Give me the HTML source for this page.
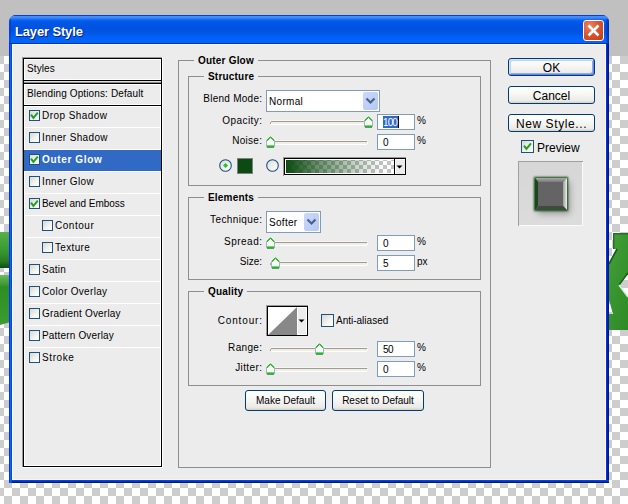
<!DOCTYPE html>
<html><head><meta charset="utf-8"><style>
*{margin:0;padding:0;box-sizing:border-box}
html,body{width:628px;height:504px;overflow:hidden}
body{position:relative;background:#c0c0c0;font-family:"Liberation Sans",sans-serif;}
.a{position:absolute}
.checker{position:absolute;left:0;top:56px;width:628px;height:448px;
 background-color:#cdcdcd;
 background-image:linear-gradient(45deg,#fff 25%,transparent 25%,transparent 75%,#fff 75%),linear-gradient(45deg,#fff 25%,transparent 25%,transparent 75%,#fff 75%);
 background-size:16px 16px;background-position:-4px 0,4px 8px;}
.win{position:absolute;left:9px;top:15px;width:600px;height:468px;border-radius:7px 7px 0 0;overflow:hidden;background:#0a4ee0}
.title{position:absolute;left:0;top:0;width:600px;height:29px;
 background:linear-gradient(#0a3ecf 0px,#0a3ecf 1px,#4a92fb 1px,#3a86f8 3px,#0b63f0 5px,#0058e8 7px,#0052de 13px,#0054e2 17px,#0060f6 22px,#0066fd 26px,#0a62f4 27px,#0a62f4 28px,#0036b4 28px);}
.title .tx{position:absolute;left:6px;top:10px;font:bold 13px/13px "Liberation Sans",sans-serif;letter-spacing:-0.15px;color:#fff;text-shadow:1px 1px 0 #0a1e7a;white-space:nowrap}
.fl{position:absolute;left:0;top:29px;width:3px;height:439px;background:linear-gradient(90deg,#0034e0 0,#0034e0 1px,#1262f2 1px,#1262f2 2px,#004aea 2px)}
.fr{position:absolute;right:0;top:29px;width:3px;height:439px;background:linear-gradient(90deg,#0034e0 0,#0034e0 1px,#0022b4 1px,#0022b4 2px,#001890 2px)}
.fb{position:absolute;left:3px;top:465px;width:597px;height:3px;background:linear-gradient(#0046f0 0,#0046f0 1px,#0030c0 1px,#0030c0 2px,#001888 2px)}
.client{position:absolute;background:#ececec;border:1px solid #fff8e8}
.close{position:absolute;left:574px;top:5px;width:21px;height:21px;border:1px solid #fff;border-radius:3px;
 background:radial-gradient(circle at 30% 25%,#ee8463 0,#dc5430 45%,#c23c14 100%)}
.t{position:absolute;font-size:10px;line-height:10px;white-space:nowrap;color:#000;margin-top:-1px}
.t12{position:absolute;font-size:12px;line-height:12px;white-space:nowrap;color:#000}
.b{font-weight:bold}
.r{position:absolute}
.cb{position:absolute;border:1px solid #1c5180;background:linear-gradient(135deg,#d8d8d2,#f4f4f0 60%,#fff)}
.grp{position:absolute;border:1px solid #8e8e8e}
.gt{position:absolute;background:#ececec;font-weight:bold;font-size:10px;line-height:10px;margin-top:-1px;letter-spacing:0.2px;padding:0 4px;white-space:nowrap}
.sel{position:absolute;border:1px solid #7f9db9;background:#fff}
.inp{position:absolute;width:38px;height:16px;border:1px solid #7f9db9;background:#fff}
.track{position:absolute;height:3px;background:linear-gradient(#9d9c99 0,#9d9c99 1px,#f3f1e6 1px,#f3f1e6 2px,#fff 2px);border-radius:1px 0 0 1px}
.btn{position:absolute;border:1px solid #003c74;border-radius:3px;background:linear-gradient(#fff 0,#fafaf8 30%,#ecebe6 85%,#d6d0c5 100%)}
.ddb{position:absolute;width:15px;height:18px;border-radius:2px;background:linear-gradient(135deg,#cad8fb,#b4c8f6)}
</style></head><body>
<div class="checker"></div>
<svg class="r" style="left:0;top:220px" width="40" height="120"><defs><linearGradient id="gl1" x1="0" y1="0" x2="0" y2="1"><stop offset="0" stop-color="#58b048"/><stop offset="0.5" stop-color="#3a9a2e"/><stop offset="0.8" stop-color="#2a7e22"/><stop offset="1" stop-color="#0e4e0e"/></linearGradient><linearGradient id="gl2" x1="0" y1="0" x2="0" y2="1"><stop offset="0" stop-color="#6cbc5c"/><stop offset="0.25" stop-color="#2e8e22"/><stop offset="1" stop-color="#3c9c30"/></linearGradient></defs><rect x="0" y="12" width="40" height="36" fill="url(#gl1)"/><path d="M0 55 H40 V90 Q20 100 0 105 Z" fill="url(#gl2)"/></svg>
<svg class="r" style="left:600px;top:220px" width="28" height="120"><defs><linearGradient id="gx" x1="0" y1="0" x2="1" y2="1"><stop offset="0" stop-color="#4aa63c"/><stop offset="0.5" stop-color="#3a9630"/><stop offset="1" stop-color="#2e8a26"/></linearGradient></defs><path d="M13 13 H28 V53 L19 65 L28 77 V110 H0 V94 H13 L9 80 V44 L17 29 H13 Z" fill="url(#gx)"/><path d="M13.7 29 V13.7 H28" stroke="#256e25" stroke-width="1.4" fill="none"/><path d="M17 29 L9 44" stroke="#1a561a" stroke-width="1.6"/><path d="M19 65 L28 53" stroke="#1d5e1d" stroke-width="1.5"/><path d="M19 65 L28 77" stroke="#d8f0d8" stroke-width="1.5"/></svg>
<div class="win"><div class="title"><div class="tx">Layer Style</div><div class="close"><svg width="21" height="21" style="position:absolute;left:-1px;top:-1px" viewBox="0 0 21 21"><path d="M5.5 5.5 L15.5 15.5 M15.5 5.5 L5.5 15.5" stroke="#fff" stroke-width="2.6"/></svg></div><div class="r" style="left:597px;top:4px;width:3px;height:25px;background:linear-gradient(90deg,rgba(0,40,200,0.25),rgba(0,24,150,0.7))"></div><div class="r" style="left:0;top:4px;width:2px;height:25px;background:rgba(0,40,200,0.35)"></div></div><div class="fl"></div><div class="fr"></div><div class="fb"></div></div>
<div class="client" style="left:12px;top:44px;width:594px;height:436px"></div>
<div class="r" style="left:22px;top:57px;width:140px;height:1px;background:#9a9a9a;"></div>
<div class="r" style="left:22px;top:57px;width:1px;height:410px;background:#9a9a9a;"></div>
<div class="r" style="left:162px;top:57px;width:1px;height:411px;background:#fff;"></div>
<div class="r" style="left:22px;top:467px;width:141px;height:1px;background:#fff;"></div>
<div class="r" style="left:23px;top:58px;width:139px;height:409px;background:#000;"></div>
<div class="r" style="left:24px;top:59px;width:137px;height:407px;background:#ececec;"></div>
<div class="r" style="left:24px;top:59px;width:137px;height:1px;background:#fff;"></div>
<div class="r" style="left:24px;top:59px;width:1px;height:407px;background:#fff;"></div>
<div class="r" style="left:160px;top:59px;width:1px;height:407px;background:#fff;"></div>
<div class="r" style="left:24px;top:465px;width:137px;height:1px;background:#fff;"></div>
<div class="r" style="left:24px;top:79px;width:137px;height:1px;background:#fff;"></div>
<div class="r" style="left:24px;top:80px;width:137px;height:1px;background:#000;"></div>
<div class="r" style="left:24px;top:81px;width:137px;height:1px;background:#dcdcdc;"></div>
<div class="r" style="left:24px;top:82px;width:137px;height:1px;background:#8a8a8a;"></div>
<div class="r" style="left:24px;top:83px;width:137px;height:1px;background:#000;"></div>
<div class="r" style="left:24px;top:84px;width:137px;height:1px;background:#fff;"></div>
<div class="r" style="left:24px;top:104px;width:137px;height:1px;background:#fff;"></div>
<div class="r" style="left:24px;top:105px;width:137px;height:1px;background:#000;"></div>
<div class="r" style="left:24px;top:106px;width:137px;height:1px;background:#fff;"></div>
<div class="r" style="left:24px;top:127px;width:137px;height:1px;background:#fff;"></div>
<div class="r" style="left:24px;top:149px;width:137px;height:1px;background:#fff;"></div>
<div class="r" style="left:24px;top:171px;width:137px;height:1px;background:#fff;"></div>
<div class="r" style="left:24px;top:193px;width:137px;height:1px;background:#fff;"></div>
<div class="r" style="left:24px;top:215px;width:137px;height:1px;background:#fff;"></div>
<div class="r" style="left:24px;top:237px;width:137px;height:1px;background:#fff;"></div>
<div class="r" style="left:24px;top:259px;width:137px;height:1px;background:#fff;"></div>
<div class="r" style="left:24px;top:281px;width:137px;height:1px;background:#fff;"></div>
<div class="r" style="left:24px;top:303px;width:137px;height:1px;background:#fff;"></div>
<div class="r" style="left:24px;top:325px;width:137px;height:1px;background:#fff;"></div>
<div class="r" style="left:24px;top:347px;width:137px;height:1px;background:#fff;"></div>
<div class="r" style="left:24px;top:150px;width:137px;height:21px;background:#316ac5;"></div>
<div class="t" style="left:27px;top:65px;letter-spacing:0.1px">Styles</div>
<div class="t" style="left:27px;top:90px;letter-spacing:0.12px">Blending Options: Default</div>
<div class="cb" style="left:29px;top:110px;width:11px;height:11px"><svg width="11" height="11" style="position:absolute;left:-1px;top:-1px" viewBox="0 0 11 11"><path d="M2 4.6 L4.4 7.8 L8.8 2.6" stroke="#21a121" stroke-width="2" fill="none"/></svg></div>
<div class="t" style="left:42px;top:112px;letter-spacing:0.45px">Drop Shadow</div>
<div class="cb" style="left:29px;top:132px;width:11px;height:11px"></div>
<div class="t" style="left:42px;top:134px;letter-spacing:0.35px">Inner Shadow</div>
<div class="cb" style="left:29px;top:154px;width:11px;height:11px"><svg width="11" height="11" style="position:absolute;left:-1px;top:-1px" viewBox="0 0 11 11"><path d="M2 4.6 L4.4 7.8 L8.8 2.6" stroke="#21a121" stroke-width="2" fill="none"/></svg></div>
<div class="t b" style="left:42px;top:156px;color:#fff;letter-spacing:0.65px">Outer Glow</div>
<div class="cb" style="left:29px;top:176px;width:11px;height:11px"></div>
<div class="t" style="left:42px;top:178px;letter-spacing:0.38px">Inner Glow</div>
<div class="cb" style="left:29px;top:198px;width:11px;height:11px"><svg width="11" height="11" style="position:absolute;left:-1px;top:-1px" viewBox="0 0 11 11"><path d="M2 4.6 L4.4 7.8 L8.8 2.6" stroke="#21a121" stroke-width="2" fill="none"/></svg></div>
<div class="t" style="left:42px;top:200px;letter-spacing:-0.05px">Bevel and Emboss</div>
<div class="cb" style="left:42px;top:220px;width:11px;height:11px"></div>
<div class="t" style="left:55px;top:222px;letter-spacing:0.53px">Contour</div>
<div class="cb" style="left:42px;top:242px;width:11px;height:11px"></div>
<div class="t" style="left:55px;top:244px;letter-spacing:0.33px">Texture</div>
<div class="cb" style="left:29px;top:264px;width:11px;height:11px"></div>
<div class="t" style="left:42px;top:266px;letter-spacing:0.25px">Satin</div>
<div class="cb" style="left:29px;top:286px;width:11px;height:11px"></div>
<div class="t" style="left:42px;top:288px;letter-spacing:0.33px">Color Overlay</div>
<div class="cb" style="left:29px;top:308px;width:11px;height:11px"></div>
<div class="t" style="left:42px;top:310px;letter-spacing:0.2px">Gradient Overlay</div>
<div class="cb" style="left:29px;top:330px;width:11px;height:11px"></div>
<div class="t" style="left:42px;top:332px;letter-spacing:0.17px">Pattern Overlay</div>
<div class="cb" style="left:29px;top:352px;width:11px;height:11px"></div>
<div class="t" style="left:42px;top:354px;letter-spacing:0.6px">Stroke</div>
<div class="r" style="left:178px;top:60px;width:313px;height:1px;background:#8e8e8e;"></div>
<div class="r" style="left:178px;top:467px;width:313px;height:1px;background:#8e8e8e;"></div>
<div class="r" style="left:178px;top:60px;width:1px;height:408px;background:#8e8e8e;"></div>
<div class="r" style="left:490px;top:60px;width:1px;height:408px;background:#8e8e8e;"></div>
<div class="gt" style="left:194px;top:57px">Outer Glow</div>
<div class="r" style="left:188px;top:76px;width:293px;height:1px;background:#8e8e8e;"></div>
<div class="r" style="left:188px;top:185px;width:293px;height:1px;background:#8e8e8e;"></div>
<div class="r" style="left:188px;top:76px;width:1px;height:110px;background:#8e8e8e;"></div>
<div class="r" style="left:480px;top:76px;width:1px;height:110px;background:#8e8e8e;"></div>
<div class="gt" style="left:204px;top:73px">Structure</div>
<div class="r" style="left:188px;top:197px;width:293px;height:1px;background:#8e8e8e;"></div>
<div class="r" style="left:188px;top:279px;width:293px;height:1px;background:#8e8e8e;"></div>
<div class="r" style="left:188px;top:197px;width:1px;height:83px;background:#8e8e8e;"></div>
<div class="r" style="left:480px;top:197px;width:1px;height:83px;background:#8e8e8e;"></div>
<div class="gt" style="left:204px;top:194px">Elements</div>
<div class="r" style="left:188px;top:291px;width:293px;height:1px;background:#8e8e8e;"></div>
<div class="r" style="left:188px;top:385px;width:293px;height:1px;background:#8e8e8e;"></div>
<div class="r" style="left:188px;top:291px;width:1px;height:95px;background:#8e8e8e;"></div>
<div class="r" style="left:480px;top:291px;width:1px;height:95px;background:#8e8e8e;"></div>
<div class="gt" style="left:204px;top:288px">Quality</div>
<div class="t" style="right:365.74px;top:95px;letter-spacing:0.26px">Blend Mode:</div>
<div class="sel" style="left:266px;top:90px;width:114px;height:22px"></div>
<div class="ddb" style="left:363px;top:92px"></div>
<svg class="r" style="left:363px;top:92px" width="15" height="18"><path d="M3.5 6.5 L7.5 10.5 L11.5 6.5" stroke="#4d6185" stroke-width="2.2" fill="none"/></svg>
<div class="t" style="left:269px;top:98px;letter-spacing:0.3px">Normal</div>
<div class="t" style="right:365.57px;top:117px;letter-spacing:0.43px">Opacity:</div>
<div class="r" style="left:271px;top:120px;width:97px;height:1px;background:#f6f6f4;"></div>
<div class="r" style="left:271px;top:121px;width:96px;height:1px;background:#9d9c99;"></div>
<div class="r" style="left:271px;top:122px;width:96px;height:2px;background:#f1efe4;"></div>
<div class="r" style="left:271px;top:124px;width:96px;height:1px;background:#ffffff;"></div>
<div class="r" style="left:270px;top:122px;width:1px;height:2px;background:#a8a7a4;"></div>
<div class="r" style="left:367px;top:122px;width:1px;height:2px;background:#ffffff;"></div>
<svg class="r" style="left:364px;top:116px" width="9" height="12" shape-rendering="crispEdges"><rect x="4" y="0" width="1" height="1" fill="#a8bcc4"/><rect x="3" y="1" width="3" height="1" fill="#32c032"/><rect x="2" y="2" width="2" height="1" fill="#32c032"/><rect x="4" y="2" width="1" height="1" fill="#fbfbf9"/><rect x="5" y="2" width="2" height="1" fill="#32c032"/><rect x="1" y="3" width="2" height="1" fill="#32c032"/><rect x="3" y="3" width="3" height="1" fill="#fbfbf9"/><rect x="6" y="3" width="2" height="1" fill="#32c032"/><rect x="0" y="4" width="1" height="1" fill="#a3b3c0"/><rect x="1" y="4" width="1" height="1" fill="#32c032"/><rect x="2" y="4" width="5" height="1" fill="#fbfbf9"/><rect x="7" y="4" width="1" height="1" fill="#32c032"/><rect x="8" y="4" width="1" height="1" fill="#a3b3c0"/><rect x="0" y="5" width="1" height="6" fill="#a3b3c0"/><rect x="8" y="5" width="1" height="6" fill="#a3b3c0"/><rect x="1" y="5" width="7" height="4" fill="#fbfbf9"/><rect x="1" y="9" width="7" height="1" fill="#6ad86a"/><rect x="1" y="10" width="7" height="1" fill="#1ec01e"/><rect x="1" y="11" width="7" height="1" fill="#6a9078"/></svg>
<div class="inp" style="left:377px;top:114px"></div>
<div class="r" style="left:383px;top:116px;width:15px;height:12px;background:#316ac5;"></div>
<div class="r" style="left:398px;top:116px;width:1px;height:12px;background:#000;"></div>
<div class="t" style="left:383px;top:119px;color:#fff;letter-spacing:-0.9px">100</div>
<div class="t" style="left:417px;top:117px;">%</div>
<div class="t" style="right:365.7px;top:137px;letter-spacing:0.3px">Noise:</div>
<div class="r" style="left:271px;top:140px;width:97px;height:1px;background:#f6f6f4;"></div>
<div class="r" style="left:271px;top:141px;width:96px;height:1px;background:#9d9c99;"></div>
<div class="r" style="left:271px;top:142px;width:96px;height:2px;background:#f1efe4;"></div>
<div class="r" style="left:271px;top:144px;width:96px;height:1px;background:#ffffff;"></div>
<div class="r" style="left:270px;top:142px;width:1px;height:2px;background:#a8a7a4;"></div>
<div class="r" style="left:367px;top:142px;width:1px;height:2px;background:#ffffff;"></div>
<svg class="r" style="left:266px;top:136px" width="9" height="12" shape-rendering="crispEdges"><rect x="4" y="0" width="1" height="1" fill="#a8bcc4"/><rect x="3" y="1" width="3" height="1" fill="#32c032"/><rect x="2" y="2" width="2" height="1" fill="#32c032"/><rect x="4" y="2" width="1" height="1" fill="#fbfbf9"/><rect x="5" y="2" width="2" height="1" fill="#32c032"/><rect x="1" y="3" width="2" height="1" fill="#32c032"/><rect x="3" y="3" width="3" height="1" fill="#fbfbf9"/><rect x="6" y="3" width="2" height="1" fill="#32c032"/><rect x="0" y="4" width="1" height="1" fill="#a3b3c0"/><rect x="1" y="4" width="1" height="1" fill="#32c032"/><rect x="2" y="4" width="5" height="1" fill="#fbfbf9"/><rect x="7" y="4" width="1" height="1" fill="#32c032"/><rect x="8" y="4" width="1" height="1" fill="#a3b3c0"/><rect x="0" y="5" width="1" height="6" fill="#a3b3c0"/><rect x="8" y="5" width="1" height="6" fill="#a3b3c0"/><rect x="1" y="5" width="7" height="4" fill="#fbfbf9"/><rect x="1" y="9" width="7" height="1" fill="#6ad86a"/><rect x="1" y="10" width="7" height="1" fill="#1ec01e"/><rect x="1" y="11" width="7" height="1" fill="#6a9078"/></svg>
<div class="inp" style="left:377px;top:134px"></div>
<div class="t" style="left:383px;top:139px;letter-spacing:-0.6px">0</div>
<div class="t" style="left:417px;top:137px;">%</div>
<svg class="r" style="left:219px;top:159px" width="13" height="13"><defs><linearGradient id="rg219" x1="0" y1="0" x2="1" y2="1"><stop offset="0" stop-color="#dcdcd6"/><stop offset="1" stop-color="#fff"/></linearGradient></defs><circle cx="6.5" cy="6.5" r="5.8" fill="url(#rg219)" stroke="#1c5180" stroke-width="1.1"/><path d="M6.5 4 L9 6.5 L6.5 9 L4 6.5 Z" fill="#2ac12a"/></svg>
<div class="r" style="left:237px;top:158px;width:16px;height:16px;background:#808080;"></div>
<div class="r" style="left:238px;top:159px;width:14px;height:14px;background:#0b4a10;"></div>
<svg class="r" style="left:266px;top:159px" width="13" height="13"><defs><linearGradient id="rg266" x1="0" y1="0" x2="1" y2="1"><stop offset="0" stop-color="#dcdcd6"/><stop offset="1" stop-color="#fff"/></linearGradient></defs><circle cx="6.5" cy="6.5" r="5.8" fill="url(#rg266)" stroke="#1c5180" stroke-width="1.1"/></svg>
<div class="r" style="left:283px;top:157px;width:123px;height:1px;background:#9a9a9a;"></div>
<div class="r" style="left:283px;top:157px;width:1px;height:19px;background:#9a9a9a;"></div>
<div class="r" style="left:284px;top:158px;width:122px;height:17px;background:#000;"></div>
<div class="r" style="left:285px;top:159px;width:120px;height:15px;background:#fff;"></div>
<div class="r" style="left:286px;top:160px;width:108px;height:13px;background-color:#fff;background-image:linear-gradient(45deg,#c2c2c2 25%,transparent 25%,transparent 75%,#c2c2c2 75%),linear-gradient(45deg,#c2c2c2 25%,transparent 25%,transparent 75%,#c2c2c2 75%);background-size:8px 8px;background-position:1px 1px,5px 5px"></div>
<div class="r" style="left:286px;top:160px;width:108px;height:13px;background:linear-gradient(90deg,#0b4a10 0%,rgba(11,74,16,0.6) 30%,rgba(11,74,16,0.12) 75%,rgba(11,74,16,0) 92%)"></div>
<div class="r" style="left:394px;top:158px;width:1px;height:17px;background:#000;"></div>
<div class="r" style="left:395px;top:159px;width:10px;height:15px;background:#fff;"></div>
<div class="r" style="left:396px;top:160px;width:9px;height:14px;background:#ececec;"></div>
<svg class="r" style="left:396px;top:165px" width="8" height="5"><path d="M0.5 0.5 H6.5 L3.5 3.5 Z" fill="#000"/></svg>
<div class="t" style="right:365.6px;top:216px;letter-spacing:0.4px">Technique:</div>
<div class="sel" style="left:266px;top:211px;width:55px;height:22px"></div>
<div class="ddb" style="left:304px;top:213px"></div>
<svg class="r" style="left:304px;top:213px" width="15" height="18"><path d="M3.5 6.5 L7.5 10.5 L11.5 6.5" stroke="#4d6185" stroke-width="2.2" fill="none"/></svg>
<div class="t" style="left:269px;top:219px;letter-spacing:0.3px">Softer</div>
<div class="t" style="right:365.5px;top:238px;letter-spacing:0.5px">Spread:</div>
<div class="r" style="left:271px;top:241px;width:97px;height:1px;background:#f6f6f4;"></div>
<div class="r" style="left:271px;top:242px;width:96px;height:1px;background:#9d9c99;"></div>
<div class="r" style="left:271px;top:243px;width:96px;height:2px;background:#f1efe4;"></div>
<div class="r" style="left:271px;top:245px;width:96px;height:1px;background:#ffffff;"></div>
<div class="r" style="left:270px;top:243px;width:1px;height:2px;background:#a8a7a4;"></div>
<div class="r" style="left:367px;top:243px;width:1px;height:2px;background:#ffffff;"></div>
<svg class="r" style="left:266px;top:237px" width="9" height="12" shape-rendering="crispEdges"><rect x="4" y="0" width="1" height="1" fill="#a8bcc4"/><rect x="3" y="1" width="3" height="1" fill="#32c032"/><rect x="2" y="2" width="2" height="1" fill="#32c032"/><rect x="4" y="2" width="1" height="1" fill="#fbfbf9"/><rect x="5" y="2" width="2" height="1" fill="#32c032"/><rect x="1" y="3" width="2" height="1" fill="#32c032"/><rect x="3" y="3" width="3" height="1" fill="#fbfbf9"/><rect x="6" y="3" width="2" height="1" fill="#32c032"/><rect x="0" y="4" width="1" height="1" fill="#a3b3c0"/><rect x="1" y="4" width="1" height="1" fill="#32c032"/><rect x="2" y="4" width="5" height="1" fill="#fbfbf9"/><rect x="7" y="4" width="1" height="1" fill="#32c032"/><rect x="8" y="4" width="1" height="1" fill="#a3b3c0"/><rect x="0" y="5" width="1" height="6" fill="#a3b3c0"/><rect x="8" y="5" width="1" height="6" fill="#a3b3c0"/><rect x="1" y="5" width="7" height="4" fill="#fbfbf9"/><rect x="1" y="9" width="7" height="1" fill="#6ad86a"/><rect x="1" y="10" width="7" height="1" fill="#1ec01e"/><rect x="1" y="11" width="7" height="1" fill="#6a9078"/></svg>
<div class="inp" style="left:377px;top:235px"></div>
<div class="t" style="left:383px;top:240px;letter-spacing:-0.6px">0</div>
<div class="t" style="left:417px;top:238px;">%</div>
<div class="t" style="right:366px;top:258px;letter-spacing:0px">Size:</div>
<div class="r" style="left:271px;top:261px;width:97px;height:1px;background:#f6f6f4;"></div>
<div class="r" style="left:271px;top:262px;width:96px;height:1px;background:#9d9c99;"></div>
<div class="r" style="left:271px;top:263px;width:96px;height:2px;background:#f1efe4;"></div>
<div class="r" style="left:271px;top:265px;width:96px;height:1px;background:#ffffff;"></div>
<div class="r" style="left:270px;top:263px;width:1px;height:2px;background:#a8a7a4;"></div>
<div class="r" style="left:367px;top:263px;width:1px;height:2px;background:#ffffff;"></div>
<svg class="r" style="left:271px;top:257px" width="9" height="12" shape-rendering="crispEdges"><rect x="4" y="0" width="1" height="1" fill="#a8bcc4"/><rect x="3" y="1" width="3" height="1" fill="#32c032"/><rect x="2" y="2" width="2" height="1" fill="#32c032"/><rect x="4" y="2" width="1" height="1" fill="#fbfbf9"/><rect x="5" y="2" width="2" height="1" fill="#32c032"/><rect x="1" y="3" width="2" height="1" fill="#32c032"/><rect x="3" y="3" width="3" height="1" fill="#fbfbf9"/><rect x="6" y="3" width="2" height="1" fill="#32c032"/><rect x="0" y="4" width="1" height="1" fill="#a3b3c0"/><rect x="1" y="4" width="1" height="1" fill="#32c032"/><rect x="2" y="4" width="5" height="1" fill="#fbfbf9"/><rect x="7" y="4" width="1" height="1" fill="#32c032"/><rect x="8" y="4" width="1" height="1" fill="#a3b3c0"/><rect x="0" y="5" width="1" height="6" fill="#a3b3c0"/><rect x="8" y="5" width="1" height="6" fill="#a3b3c0"/><rect x="1" y="5" width="7" height="4" fill="#fbfbf9"/><rect x="1" y="9" width="7" height="1" fill="#6ad86a"/><rect x="1" y="10" width="7" height="1" fill="#1ec01e"/><rect x="1" y="11" width="7" height="1" fill="#6a9078"/></svg>
<div class="inp" style="left:377px;top:255px"></div>
<div class="t" style="left:383px;top:260px;letter-spacing:-0.6px">5</div>
<div class="t" style="left:417px;top:258px;">px</div>
<div class="t" style="right:365.15px;top:317px;letter-spacing:0.85px">Contour:</div>
<div class="r" style="left:266px;top:305px;width:42px;height:1px;background:#9a9a9a;"></div>
<div class="r" style="left:266px;top:305px;width:1px;height:31px;background:#9a9a9a;"></div>
<div class="r" style="left:267px;top:306px;width:41px;height:30px;background:#000;"></div>
<div class="r" style="left:268px;top:307px;width:29px;height:28px;background:#fff;"></div>
<svg class="r" style="left:268px;top:307px" width="29" height="28"><path d="M0 28 L29 0 L29 28 Z" fill="#888"/></svg>
<div class="r" style="left:297px;top:307px;width:10px;height:28px;background:#fff;"></div>
<div class="r" style="left:298px;top:308px;width:8px;height:26px;background:#ececec;"></div>
<svg class="r" style="left:298px;top:319px" width="8" height="5"><path d="M0.5 0.5 H6.5 L3.5 3.5 Z" fill="#000"/></svg>
<div class="cb" style="left:321px;top:314px;width:13px;height:13px"></div>
<div class="t" style="left:336px;top:317px;">Anti-aliased</div>
<div class="t" style="right:365.67px;top:344px;letter-spacing:0.33px">Range:</div>
<div class="r" style="left:271px;top:347px;width:97px;height:1px;background:#f6f6f4;"></div>
<div class="r" style="left:271px;top:348px;width:96px;height:1px;background:#9d9c99;"></div>
<div class="r" style="left:271px;top:349px;width:96px;height:2px;background:#f1efe4;"></div>
<div class="r" style="left:271px;top:351px;width:96px;height:1px;background:#ffffff;"></div>
<div class="r" style="left:270px;top:349px;width:1px;height:2px;background:#a8a7a4;"></div>
<div class="r" style="left:367px;top:349px;width:1px;height:2px;background:#ffffff;"></div>
<svg class="r" style="left:315px;top:343px" width="9" height="12" shape-rendering="crispEdges"><rect x="4" y="0" width="1" height="1" fill="#a8bcc4"/><rect x="3" y="1" width="3" height="1" fill="#32c032"/><rect x="2" y="2" width="2" height="1" fill="#32c032"/><rect x="4" y="2" width="1" height="1" fill="#fbfbf9"/><rect x="5" y="2" width="2" height="1" fill="#32c032"/><rect x="1" y="3" width="2" height="1" fill="#32c032"/><rect x="3" y="3" width="3" height="1" fill="#fbfbf9"/><rect x="6" y="3" width="2" height="1" fill="#32c032"/><rect x="0" y="4" width="1" height="1" fill="#a3b3c0"/><rect x="1" y="4" width="1" height="1" fill="#32c032"/><rect x="2" y="4" width="5" height="1" fill="#fbfbf9"/><rect x="7" y="4" width="1" height="1" fill="#32c032"/><rect x="8" y="4" width="1" height="1" fill="#a3b3c0"/><rect x="0" y="5" width="1" height="6" fill="#a3b3c0"/><rect x="8" y="5" width="1" height="6" fill="#a3b3c0"/><rect x="1" y="5" width="7" height="4" fill="#fbfbf9"/><rect x="1" y="9" width="7" height="1" fill="#6ad86a"/><rect x="1" y="10" width="7" height="1" fill="#1ec01e"/><rect x="1" y="11" width="7" height="1" fill="#6a9078"/></svg>
<div class="inp" style="left:377px;top:341px"></div>
<div class="t" style="left:383px;top:346px;letter-spacing:-0.6px">50</div>
<div class="t" style="left:417px;top:344px;">%</div>
<div class="t" style="right:365.6px;top:364px;letter-spacing:0.4px">Jitter:</div>
<div class="r" style="left:271px;top:367px;width:97px;height:1px;background:#f6f6f4;"></div>
<div class="r" style="left:271px;top:368px;width:96px;height:1px;background:#9d9c99;"></div>
<div class="r" style="left:271px;top:369px;width:96px;height:2px;background:#f1efe4;"></div>
<div class="r" style="left:271px;top:371px;width:96px;height:1px;background:#ffffff;"></div>
<div class="r" style="left:270px;top:369px;width:1px;height:2px;background:#a8a7a4;"></div>
<div class="r" style="left:367px;top:369px;width:1px;height:2px;background:#ffffff;"></div>
<svg class="r" style="left:266px;top:363px" width="9" height="12" shape-rendering="crispEdges"><rect x="4" y="0" width="1" height="1" fill="#a8bcc4"/><rect x="3" y="1" width="3" height="1" fill="#32c032"/><rect x="2" y="2" width="2" height="1" fill="#32c032"/><rect x="4" y="2" width="1" height="1" fill="#fbfbf9"/><rect x="5" y="2" width="2" height="1" fill="#32c032"/><rect x="1" y="3" width="2" height="1" fill="#32c032"/><rect x="3" y="3" width="3" height="1" fill="#fbfbf9"/><rect x="6" y="3" width="2" height="1" fill="#32c032"/><rect x="0" y="4" width="1" height="1" fill="#a3b3c0"/><rect x="1" y="4" width="1" height="1" fill="#32c032"/><rect x="2" y="4" width="5" height="1" fill="#fbfbf9"/><rect x="7" y="4" width="1" height="1" fill="#32c032"/><rect x="8" y="4" width="1" height="1" fill="#a3b3c0"/><rect x="0" y="5" width="1" height="6" fill="#a3b3c0"/><rect x="8" y="5" width="1" height="6" fill="#a3b3c0"/><rect x="1" y="5" width="7" height="4" fill="#fbfbf9"/><rect x="1" y="9" width="7" height="1" fill="#6ad86a"/><rect x="1" y="10" width="7" height="1" fill="#1ec01e"/><rect x="1" y="11" width="7" height="1" fill="#6a9078"/></svg>
<div class="inp" style="left:377px;top:361px"></div>
<div class="t" style="left:383px;top:366px;letter-spacing:-0.6px">0</div>
<div class="t" style="left:417px;top:364px;">%</div>
<div class="btn" style="left:245px;top:390px;width:81px;height:21px;"></div>
<div class="t" style="left:245px;top:397px;width:81px;text-align:center">Make Default</div>
<div class="btn" style="left:332px;top:390px;width:92px;height:21px;"></div>
<div class="t" style="left:332px;top:397px;width:92px;text-align:center">Reset to Default</div>
<div class="btn" style="left:508px;top:58px;width:87px;height:18px;box-shadow:inset 1px 1px 0 #cee7ff,inset -1px -1px 0 #6982ee,inset 2px 2px 0 #bcd4f6,inset -2px -2px 0 #89adf2;"></div>
<div class="t12" style="left:508px;top:62px;width:87px;text-align:center">OK</div>
<div class="btn" style="left:508px;top:86px;width:87px;height:18px;"></div>
<div class="t12" style="left:508px;top:90px;width:87px;text-align:center">Cancel</div>
<div class="btn" style="left:508px;top:114px;width:87px;height:18px;"></div>
<div class="t12" style="left:508px;top:118px;width:87px;text-align:center"><span style="letter-spacing:0.6px">New Style...</span></div>
<div class="cb" style="left:521px;top:140px;width:13px;height:13px"><svg width="13" height="13" style="position:absolute;left:-1px;top:-1px" viewBox="0 0 13 13"><path d="M3 5.6 L5.4 8.8 L10 3.4" stroke="#21a121" stroke-width="2" fill="none"/></svg></div>
<div class="t12" style="left:537px;top:142px;">Preview</div>
<div class="r" style="left:518px;top:161px;width:65px;height:1px;background:#a0a0a0;"></div>
<div class="r" style="left:518px;top:161px;width:1px;height:65px;background:#a0a0a0;"></div>
<div class="r" style="left:582px;top:162px;width:1px;height:64px;background:#fafafa;"></div>
<div class="r" style="left:519px;top:225px;width:64px;height:1px;background:#fafafa;"></div>
<div class="r" style="left:519px;top:162px;width:63px;height:63px;background:linear-gradient(#d6d6d6,#dcdcdc)"></div>
<div class="r" style="left:538px;top:182px;width:32px;height:32px;background:rgba(0,0,0,0.28);filter:blur(3px)"></div>
<div class="r" style="left:535px;top:178px;width:32px;height:32px;box-shadow:0 0 2px 1px #0c4c0c;background:#646464"></div>
<svg class="r" style="left:535px;top:178px" width="32" height="32"><defs><linearGradient id="bt" x1="0" y1="0" x2="0" y2="1"><stop offset="0" stop-color="#a8a8a8"/><stop offset="1" stop-color="#7a7a7a"/></linearGradient><linearGradient id="br" x1="1" y1="0" x2="0" y2="0"><stop offset="0" stop-color="#f0f0f0"/><stop offset="1" stop-color="#9a9a9a"/></linearGradient></defs><path d="M0 0 H32 L28 4 H4 Z" fill="url(#bt)"/><path d="M32 0 V32 L28 28 V4 Z" fill="url(#br)"/><path d="M0 0 L3 4 V28 L0 32 Z" fill="#1e461e"/><path d="M0 32 L4 28 H28 L32 32 Z" fill="#3c4c3c"/></svg>
</body></html>
